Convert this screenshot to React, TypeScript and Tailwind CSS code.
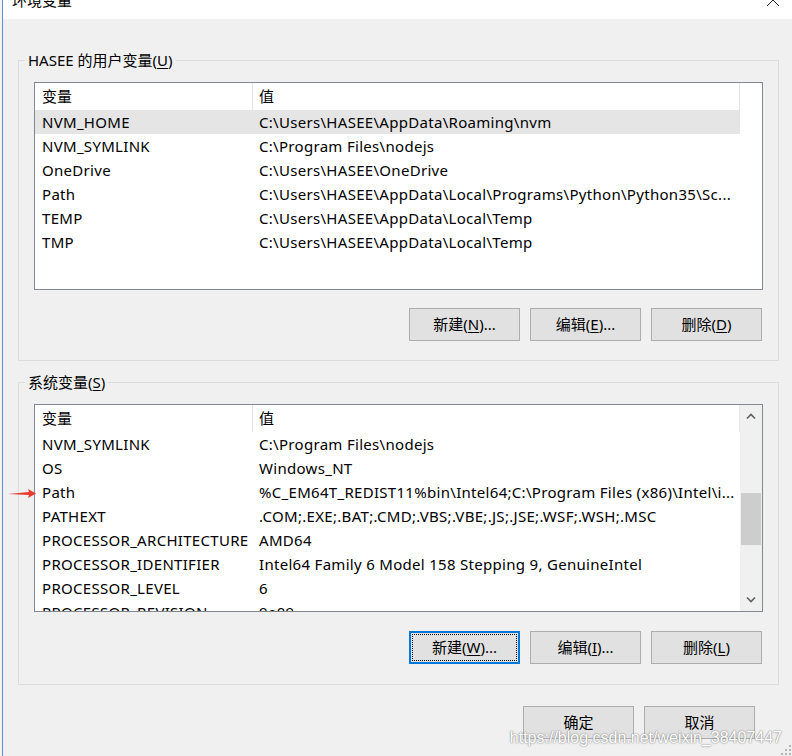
import React from "react";

const FONT = { fontFamily: '"Noto Sans", "Noto Sans CJK SC", sans-serif' };

const userRows: [string, string][] = [
  ["NVM_HOME", "C:\\Users\\HASEE\\AppData\\Roaming\\nvm"],
  ["NVM_SYMLINK", "C:\\Program Files\\nodejs"],
  ["OneDrive", "C:\\Users\\HASEE\\OneDrive"],
  ["Path", "C:\\Users\\HASEE\\AppData\\Local\\Programs\\Python\\Python35\\Sc..."],
  ["TEMP", "C:\\Users\\HASEE\\AppData\\Local\\Temp"],
  ["TMP", "C:\\Users\\HASEE\\AppData\\Local\\Temp"],
];

const sysRows: [string, string][] = [
  ["NVM_SYMLINK", "C:\\Program Files\\nodejs"],
  ["OS", "Windows_NT"],
  ["Path", "%C_EM64T_REDIST11%bin\\Intel64;C:\\Program Files (x86)\\Intel\\i..."],
  ["PATHEXT", ".COM;.EXE;.BAT;.CMD;.VBS;.VBE;.JS;.JSE;.WSF;.WSH;.MSC"],
  ["PROCESSOR_ARCHITECTURE", "AMD64"],
  ["PROCESSOR_IDENTIFIER", "Intel64 Family 6 Model 158 Stepping 9, GenuineIntel"],
  ["PROCESSOR_LEVEL", "6"],
  ["PROCESSOR_REVISION", "9e09"],
];

function Btn({ children, focused }: { children: React.ReactNode; focused?: boolean }) {
  if (focused) {
    return (
      <div className="w-[111px] h-[33px] bg-[#e1e1e1] border-2 border-[#0078d7] p-px">
        <div className="w-full h-full border border-dotted border-black flex items-center justify-center text-[15px] leading-none">
          {children}
        </div>
      </div>
    );
  }
  return (
    <div className="w-[111px] h-[33px] bg-[#e1e1e1] border border-[#adadad] flex items-center justify-center text-[15px] leading-none">
      {children}
    </div>
  );
}

function U({ children }: { children: React.ReactNode }) {
  return <span className="underline underline-offset-2">{children}</span>;
}

function ListBox({ rows, selected, scroll }: { rows: [string, string][]; selected?: number; scroll?: boolean }) {
  return (
    <div className="w-[729px] h-[208px] border border-[#828790] bg-white flex overflow-hidden">
      <div className="w-[705px] flex flex-col">
        <div className="h-[27px] flex shrink-0 text-[15px]">
          <div className="w-[217px] pl-[7px] flex items-center">变量</div>
          <div className="flex-1 border-l border-r border-[#e5e5e5] pl-[6px] flex items-center">值</div>
        </div>
        {rows.map(([k, v], i) => (
          <div
            key={k + i}
            className={
              i === selected
                ? "h-[24px] flex shrink-0 items-center bg-[#e5e5e5] text-[15px] tracking-[0.3px] whitespace-nowrap"
                : "h-[24px] flex shrink-0 items-center text-[15px] tracking-[0.3px] whitespace-nowrap"
            }
          >
            <div className="w-[217px] pl-[7px] overflow-hidden">{k}</div>
            <div className="flex-1 pl-[7px] overflow-hidden">{v}</div>
          </div>
        ))}
      </div>
      {scroll ? (
        <div className="w-[22px] bg-[#f0f0f0] flex flex-col">
          <div className="h-[22px] flex items-center justify-center">
            <svg width="12" height="8" viewBox="0 0 12 8">
              <polyline points="2,6.5 6,2.5 10,6.5" fill="none" stroke="#606060" strokeWidth="1.6" />
            </svg>
          </div>
          <div className="flex-1 flex flex-col">
            <div className="mt-[66px] mx-px h-[52px] bg-[#cdcdcd]" />
          </div>
          <div className="h-[22px] flex items-center justify-center">
            <svg width="12" height="8" viewBox="0 0 12 8">
              <polyline points="2,1.5 6,5.5 10,1.5" fill="none" stroke="#606060" strokeWidth="1.6" />
            </svg>
          </div>
        </div>
      ) : null}
    </div>
  );
}

export default function App() {
  return (
    <div className="w-[792px] h-[756px] bg-[#f0f0f0] relative overflow-hidden text-black" style={FONT}>
      <div className="flex h-full">
        <div className="w-[2px] bg-[#f4f4f4]" />
        <div className="flex-1 border-l border-[#5b8fd6] flex flex-col">
          {/* title bar */}
          <div className="h-[19px] bg-white flex justify-between overflow-hidden shrink-0">
            <div className="pl-[9px] -mt-[10px] text-[15px] leading-[20px]">环境变量</div>
            <svg width="14" height="14" viewBox="0 0 14 14" className="-mt-[7px] mr-[12px]">
              <path d="M1 1 L13 13 M13 1 L1 13" stroke="#222" strokeWidth="1" />
            </svg>
          </div>

          {/* user group */}
          <fieldset className="ml-[15px] w-[761px] mt-[31px] border border-[#dcdcdc]">
            <legend className="ml-[6px] px-[3px] text-[15px] leading-[20px]">
              HASEE 的用户变量(<U>U</U>)
            </legend>
            <div className="px-[15px] pt-[12px] pb-[19px] flex flex-col">
              <ListBox rows={userRows} selected={0} />
              <div className="mt-[18px] flex justify-end gap-[10px] pr-px">
                <Btn>
                  新建(<U>N</U>)...
                </Btn>
                <Btn>
                  编辑(<U>E</U>)...
                </Btn>
                <Btn>
                  删除(<U>D</U>)
                </Btn>
              </div>
            </div>
          </fieldset>

          {/* system group */}
          <fieldset className="ml-[15px] w-[761px] mt-[11px] border border-[#dcdcdc]">
            <legend className="ml-[6px] px-[3px] text-[15px] leading-[20px]">
              系统变量(<U>S</U>)
            </legend>
            <div className="px-[15px] pt-[12px] pb-[20px] flex flex-col">
              <ListBox rows={sysRows} scroll />
              <div className="mt-[19px] flex justify-end gap-[10px] pr-px">
                <Btn focused>
                  新建(<U>W</U>)...
                </Btn>
                <Btn>
                  编辑(<U>I</U>)...
                </Btn>
                <Btn>
                  删除(<U>L</U>)
                </Btn>
              </div>
            </div>
          </fieldset>

          {/* bottom buttons */}
          <div className="mt-[21px] flex justify-end gap-[10px] pr-[37px]">
            <Btn>确定</Btn>
            <Btn>取消</Btn>
          </div>
        </div>
      </div>

      {/* red arrow annotation */}
      <svg className="absolute left-[6px] top-[486px]" width="32" height="14" viewBox="0 0 32 14">
        <polygon points="2,8 23,6 22,3 30,7.5 22,12 23,9" fill="#e8392f" />
      </svg>

      {/* watermark */}
      <div
        className="absolute right-[10px] top-[728px] text-[16px] leading-[20px] text-white [text-shadow:0_0_2px_#8a8a8a,0_0_1px_#8a8a8a]"
        style={{ fontFamily: '"Liberation Sans", Arial, sans-serif' }}
      >
        https://blog.csdn.net/weixin_38407447
      </div>

      {/* resize grip */}
      <svg className="absolute right-0 bottom-0" width="12" height="12" viewBox="0 0 12 12">
        <rect x="9" y="1" width="2" height="2" fill="#b5b5b5" />
        <rect x="5" y="5" width="2" height="2" fill="#b5b5b5" />
        <rect x="9" y="5" width="2" height="2" fill="#b5b5b5" />
        <rect x="1" y="9" width="2" height="2" fill="#b5b5b5" />
        <rect x="5" y="9" width="2" height="2" fill="#b5b5b5" />
        <rect x="9" y="9" width="2" height="2" fill="#b5b5b5" />
      </svg>
    </div>
  );
}
